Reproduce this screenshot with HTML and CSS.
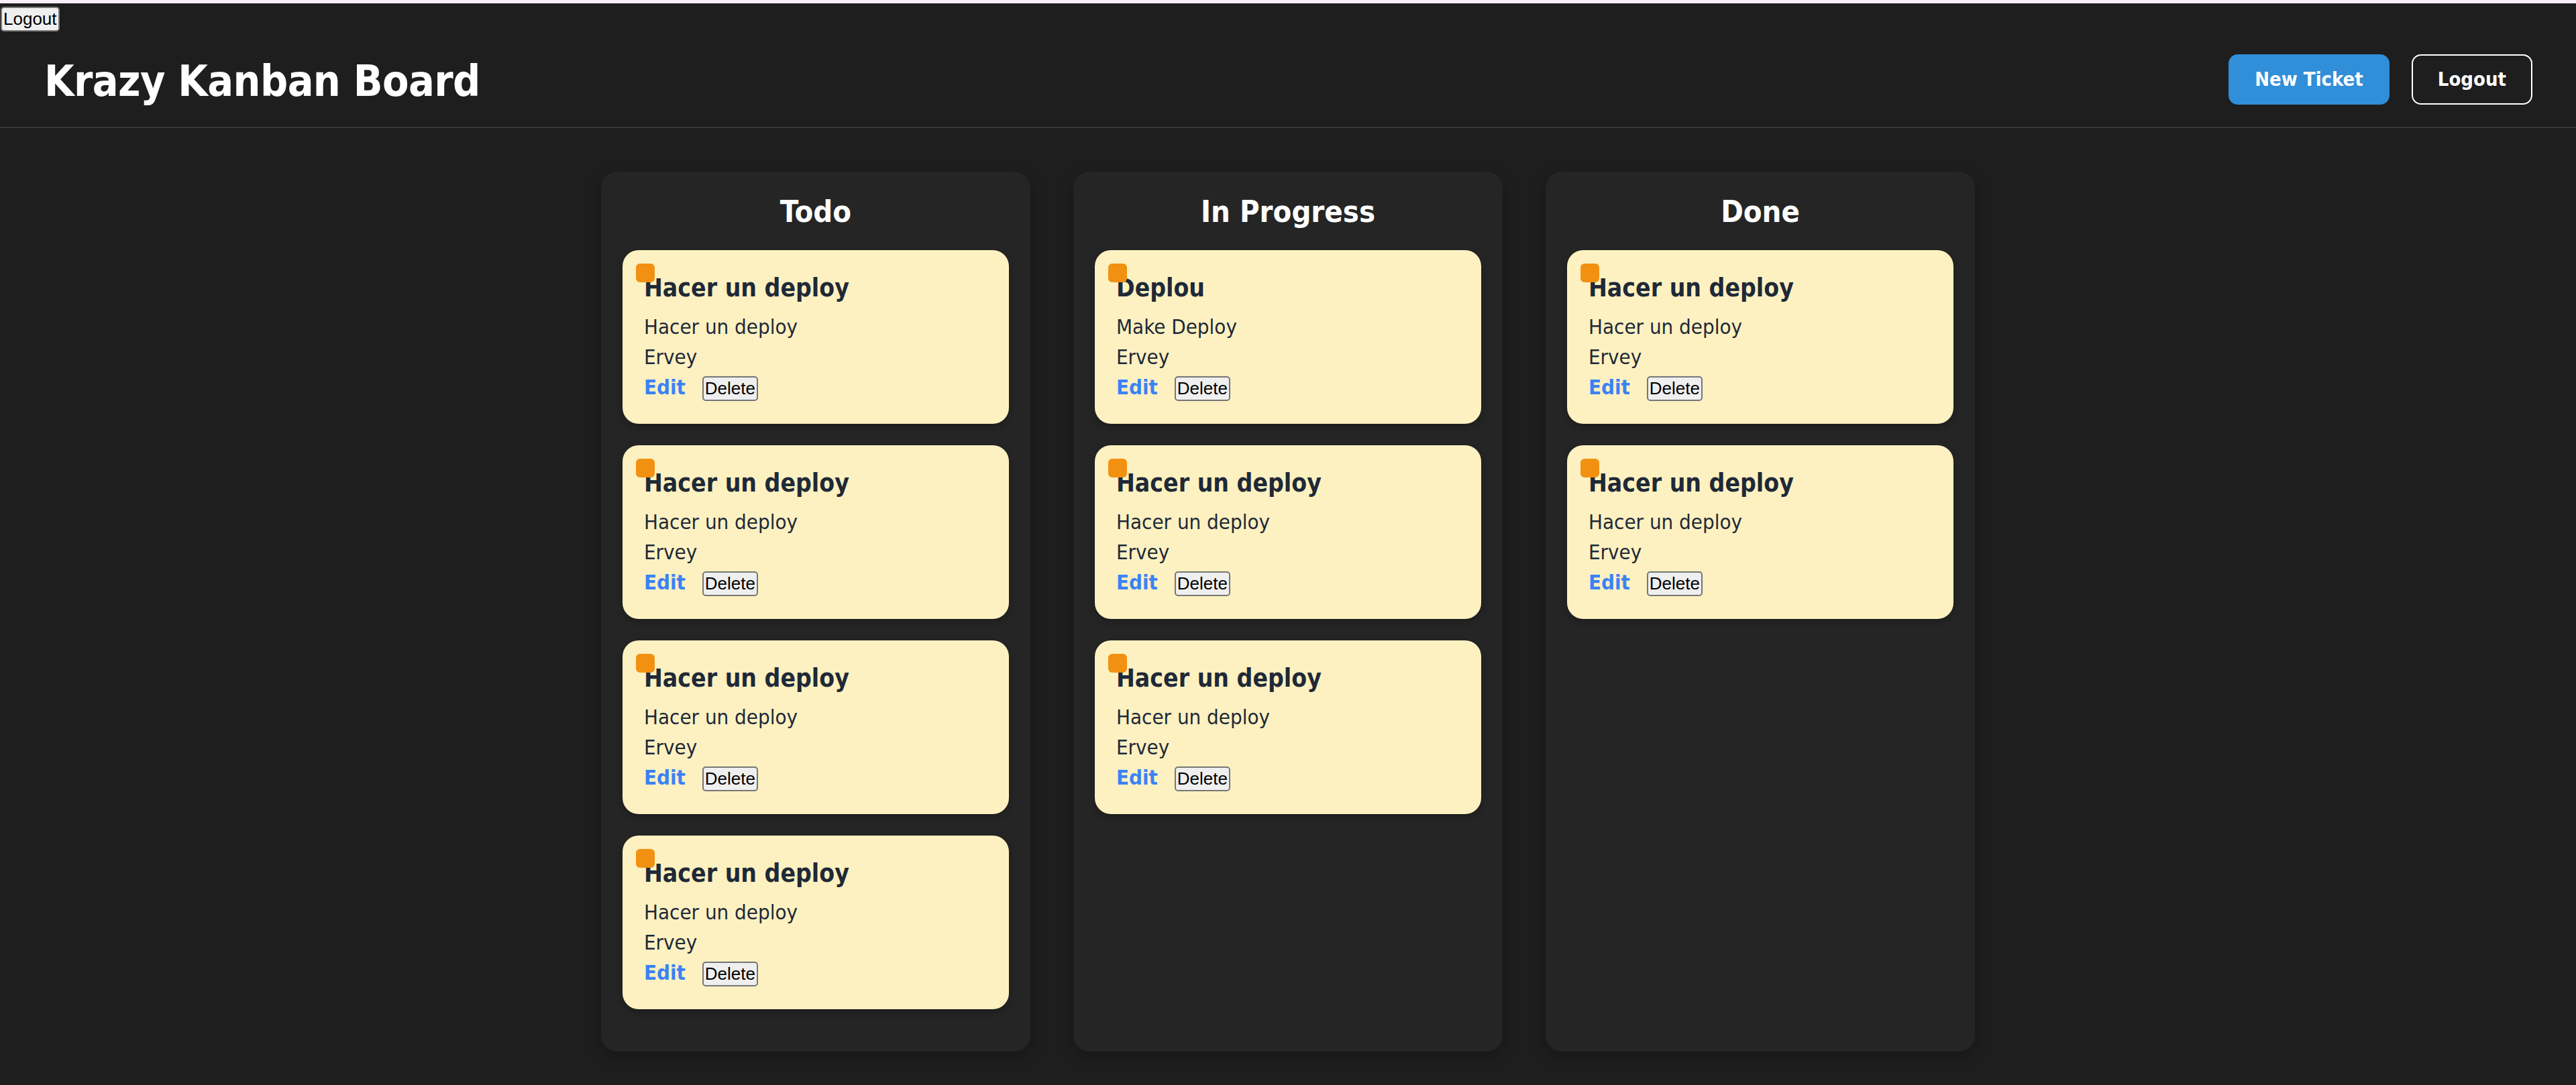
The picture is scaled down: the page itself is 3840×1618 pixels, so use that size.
FILE: index.html
```html
<!DOCTYPE html>
<html lang="en">
<head>
<meta charset="utf-8">
<title>Krazy Kanban Board</title>
<link rel="stylesheet" href="styles.css">
</head>
<body>
  <button class="native-btn top-logout">Logout</button>
  <header class="header">
    <h1 class="brand">Krazy Kanban Board</h1>
    <nav class="header-actions">
      <button class="btn btn-primary">New Ticket</button>
      <button class="btn btn-outline">Logout</button>
    </nav>
  </header>
  <main class="board">
    <section class="column">
      <h2 class="column-title">Todo</h2>
      <article class="card"><span class="card-flag"></span><h3 class="card-title">Hacer un deploy</h3><p class="card-text">Hacer un deploy</p><p class="card-text">Ervey</p><div class="card-actions"><a class="edit-link">Edit</a> <button class="native-btn">Delete</button></div></article>
      <article class="card"><span class="card-flag"></span><h3 class="card-title">Hacer un deploy</h3><p class="card-text">Hacer un deploy</p><p class="card-text">Ervey</p><div class="card-actions"><a class="edit-link">Edit</a> <button class="native-btn">Delete</button></div></article>
      <article class="card"><span class="card-flag"></span><h3 class="card-title">Hacer un deploy</h3><p class="card-text">Hacer un deploy</p><p class="card-text">Ervey</p><div class="card-actions"><a class="edit-link">Edit</a> <button class="native-btn">Delete</button></div></article>
      <article class="card"><span class="card-flag"></span><h3 class="card-title">Hacer un deploy</h3><p class="card-text">Hacer un deploy</p><p class="card-text">Ervey</p><div class="card-actions"><a class="edit-link">Edit</a> <button class="native-btn">Delete</button></div></article>
    </section>
    <section class="column">
      <h2 class="column-title">In Progress</h2>
      <article class="card"><span class="card-flag"></span><h3 class="card-title">Deplou</h3><p class="card-text">Make Deploy</p><p class="card-text">Ervey</p><div class="card-actions"><a class="edit-link">Edit</a> <button class="native-btn">Delete</button></div></article>
      <article class="card"><span class="card-flag"></span><h3 class="card-title">Hacer un deploy</h3><p class="card-text">Hacer un deploy</p><p class="card-text">Ervey</p><div class="card-actions"><a class="edit-link">Edit</a> <button class="native-btn">Delete</button></div></article>
      <article class="card"><span class="card-flag"></span><h3 class="card-title">Hacer un deploy</h3><p class="card-text">Hacer un deploy</p><p class="card-text">Ervey</p><div class="card-actions"><a class="edit-link">Edit</a> <button class="native-btn">Delete</button></div></article>
    </section>
    <section class="column">
      <h2 class="column-title">Done</h2>
      <article class="card"><span class="card-flag"></span><h3 class="card-title">Hacer un deploy</h3><p class="card-text">Hacer un deploy</p><p class="card-text">Ervey</p><div class="card-actions"><a class="edit-link">Edit</a> <button class="native-btn">Delete</button></div></article>
      <article class="card"><span class="card-flag"></span><h3 class="card-title">Hacer un deploy</h3><p class="card-text">Hacer un deploy</p><p class="card-text">Ervey</p><div class="card-actions"><a class="edit-link">Edit</a> <button class="native-btn">Delete</button></div></article>
    </section>
  </main>
</body>
</html>
```
FILE: styles.css
```css
html {
  background: #fcedfc;
}
body {
  margin: 5px 0 0 0;
  min-height: calc(100vh - 5px);
  background: #1e1e1e;
  color: #ffffff;
  font-family: "DejaVu Sans Condensed", "DejaVu Sans", sans-serif;
  padding-top: 5px;
  box-sizing: border-box;
}
.native-btn {
  font-family: "Liberation Sans", Arial, sans-serif;
  font-size: 26px;
  line-height: 29px;
  color: #000;
  background: #efefef;
  border: 2px solid #767676;
  border-radius: 5px;
  padding: 2px 2px;
  margin: 0;
  cursor: pointer;
}
.top-logout {
  display: block;
  margin-left: 1px;
}
.header {
  display: flex;
  align-items: center;
  justify-content: space-between;
  height: 142px;
  padding: 0 65px 0 66px;
  border-bottom: 2px solid #363636;
}
.brand {
  margin: 0;
  font-size: 64px;
  letter-spacing: -0.6px;
  font-weight: bold;
  line-height: 1;
  color: #ffffff;
  position: relative;
  top: 3px;
}
.header-actions {
  display: flex;
  gap: 33px;
}
.btn {
  font-family: "DejaVu Sans Condensed", "DejaVu Sans", sans-serif;
  font-weight: bold;
  font-size: 29px;
  line-height: 35px;
  height: 75px;
  padding: 0 37px;
  border-radius: 14px;
  color: #ffffff;
  white-space: nowrap;
  cursor: pointer;
}
.btn-primary {
  background: #318ed8;
  border: 2px solid #318ed8;
}
.btn-outline {
  background: transparent;
  border: 2px solid #ffffff;
}
.board {
  display: flex;
  justify-content: center;
  align-items: stretch;
  gap: 64px;
  padding: 65px 0 51px;
}
.column {
  width: 640px;
  box-sizing: border-box;
  background: #252525;
  border-radius: 24px;
  padding: 34px 32px 31px;
  box-shadow: 0 8px 24px rgba(0, 0, 0, 0.25);
}
.column-title {
  margin: 0 0 31px;
  text-align: center;
  font-size: 45px;
  line-height: 52px;
  font-weight: bold;
  color: #ffffff;
}
.card {
  position: relative;
  background: #fdf1c1;
  border-radius: 24px;
  padding: 32px;
  margin-bottom: 32px;
  color: #1f2937;
  box-shadow: 0 4px 12px rgba(0, 0, 0, 0.25);
}
.card-flag {
  position: absolute;
  left: 20px;
  top: 20px;
  width: 28px;
  height: 28px;
  border-radius: 6px;
  background: #f29111;
}
.card-title {
  margin: 0 0 11px;
  font-size: 37px;
  line-height: 49px;
  font-weight: bold;
}
.card-text {
  margin: 0;
  font-size: 31px;
  line-height: 45px;
}
.card-actions {
  font-size: 31px;
  line-height: 45px;
}
.edit-link {
  color: #3b82f6;
  font-weight: bold;
  margin-right: 16px;
  cursor: pointer;
}
```
